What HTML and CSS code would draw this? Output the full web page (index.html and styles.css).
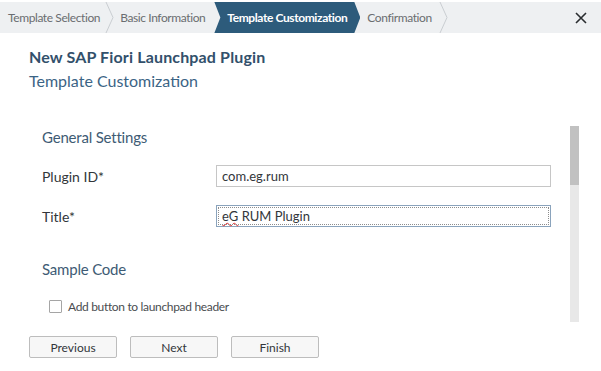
FILE: index.html
```html
<!DOCTYPE html>
<html lang="en">
<head>
    <meta charset="UTF-8">
    <title>New SAP Fiori Launchpad Plugin</title>
    <link rel="stylesheet" href="styles.css">
</head>
<body>
    <!-- Wizard steps -->
    <div class="wizard-nav">
        <div class="step">Template Selection</div>
        <svg class="chevron" width="9" height="31" viewBox="0 0 9 31"><path d="M1 0 L8 15.5 L1 31" fill="none" stroke="#c9cdd1" stroke-width="1"/></svg>
        <div class="step">Basic Information</div>
        <div class="step active">Template Customization</div>
        <div class="step">Confirmation</div>
        <svg class="chevron" width="9" height="31" viewBox="0 0 9 31"><path d="M1 0 L8 15.5 L1 31" fill="none" stroke="#c9cdd1" stroke-width="1"/></svg>
        <div class="spacer"></div>
        <div class="close">
            <svg width="12" height="12" viewBox="0 0 12 12"><path d="M1 1 L11 11 M11 1 L1 11" stroke="#2a2d30" stroke-width="1.6" fill="none"/></svg>
        </div>
    </div>

    <div class="page">
        <h1 class="title">New SAP Fiori Launchpad Plugin</h1>
        <h2 class="subtitle">Template Customization</h2>

        <div class="panel">
            <div class="panel-body">
                <h3 class="section">General Settings</h3>
                <div class="field-row">
                    <label>Plugin ID*</label>
                    <div class="input">com.eg.rum</div>
                </div>
                <div class="field-row">
                    <label>Title*</label>
                    <div class="input focused"><span class="typo">eG</span> RUM Plugin</div>
                </div>

                <h3 class="section sample">Sample Code</h3>
                <div class="check-row">
                    <span class="checkbox"></span>
                    <span>Add button to launchpad header</span>
                </div>
            </div>
            <div class="scrollbar"><div class="thumb"></div></div>
        </div>

        <div class="buttons">
            <button>Previous</button>
            <button>Next</button>
            <button>Finish</button>
        </div>
    </div>
</body>
</html>
```

FILE: styles.css
```css
body {
    margin: 0;
    font-family: Lato, "Noto Sans", Arial, sans-serif;
    background-color: #fff;
    color: #32363a;
}
.wizard-nav {
    display: flex;
    align-items: center;
    margin-top: 2px;
    height: 31px;
    background-color: #eef0f2;
    font-size: 12px;
    letter-spacing: -0.4px;
    color: #6a6d70;
}
.step {
    height: 31px;
    line-height: 31px;
    white-space: nowrap;
}
.wizard-nav .step:first-child {
    padding-left: 8px;
    padding-right: 5px;
}
.chevron {
    flex: none;
}
.chevron + .step {
    padding-left: 6px;
}
.step.active {
    margin-left: 9px;
    padding: 0 13px 0 13px;
    background-color: #2d5b7b;
    color: #fff;
    font-weight: bold;
    clip-path: polygon(0 0, calc(100% - 6px) 0, 100% 50%, calc(100% - 6px) 100%, 0 100%, 6px 50%);
}
.step.active + .step {
    padding-left: 7px;
    padding-right: 7px;
}
.spacer {
    flex: 1;
}
.close {
    width: 12px;
    height: 12px;
    margin-right: 14px;
    display: flex;
}
.page {
    padding: 0 22px 0 29px;
}
.title {
    margin: 14px 0 0;
    font-size: 16px;
    letter-spacing: 0.15px;
    line-height: 20px;
    font-weight: bold;
    color: #32506b;
}
.subtitle {
    margin: 3px 0 0;
    font-size: 16px;
    line-height: 22px;
    font-weight: normal;
    color: #3b6485;
}
.panel {
    display: flex;
    margin-top: 34px;
    height: 196px;
}
.panel-body {
    flex: 1;
    padding-left: 13px;
    padding-right: 19px;
}
.section {
    margin: 0;
    font-size: 15px;
    letter-spacing: -0.2px;
    line-height: 22px;
    font-weight: normal;
    color: #3e5b74;
}
.section.sample {
    margin-top: 31px;
}
.field-row {
    display: flex;
    align-items: center;
    margin-top: 17px;
}
.field-row + .field-row {
    margin-top: 18px;
}
.field-row label {
    width: 174px;
    font-size: 14px;
}
.input {
    flex: 1;
    box-sizing: border-box;
    height: 22px;
    line-height: 20px;
    padding-left: 5px;
    border: 1px solid #c6c6c6;
    font-size: 13px;
    color: #32363a;
}
.input.focused {
    border-color: #8aa3bc;
    outline: 1px dotted #8d8d8d;
    outline-offset: -3px;
}
.typo {
    text-decoration: underline wavy #e03030;
    text-decoration-thickness: 1px;
    text-underline-offset: 1px;
}
.check-row {
    display: flex;
    align-items: center;
    gap: 6px;
    margin-top: 16px;
    padding-left: 7px;
    height: 20px;
    font-size: 12px;
    letter-spacing: -0.33px;
    color: #4a4d50;
}
.checkbox {
    width: 11px;
    height: 11px;
    border: 1px solid #a5a5a5;
    border-radius: 1px;
    background-color: #fff;
}
.scrollbar {
    width: 9px;
    background-color: #e8e8e8;
}
.thumb {
    height: 59px;
    background-color: #c1c1c1;
}
.buttons {
    display: flex;
    gap: 13px;
    margin-top: 14px;
}
button {
    width: 88px;
    height: 22px;
    padding: 0;
    font-family: inherit;
    font-size: 12px;
    color: #32363a;
    background-color: #f7f7f7;
    border: 1px solid #bdbdbd;
    border-radius: 2px;
}
```
